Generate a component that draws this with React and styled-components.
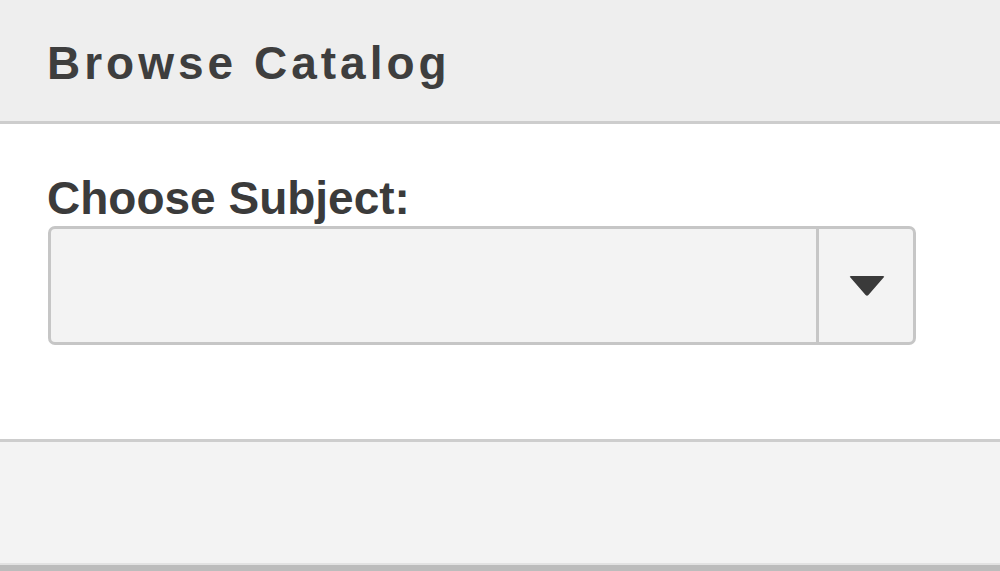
import styled, { createGlobalStyle } from "styled-components";

const GlobalStyle = createGlobalStyle`
  html, body {
    margin: 0;
    padding: 0;
    background: #ffffff;
  }
  body {
    font-family: "Liberation Sans", Arial, Helvetica, sans-serif;
    color: #3b3b3b;
  }
`;

const App = () => {
  return (
    <>
      <GlobalStyle />
      <Panel>
        <Header>
          <Title>Browse Catalog</Title>
        </Header>

        <Body>
          <Label htmlFor="subject">Choose Subject:</Label>
          <Select id="subject">
            <SelectValue />
            <SelectButton aria-label="Open subjects">
              <svg width="38" height="24" viewBox="0 0 38 24">
                <path
                  d="M3 2 L35 2 Q37 2 35.6 3.6 L20.4 21 Q19 22.4 17.6 21 L2.4 3.6 Q1 2 3 2 Z"
                  fill="#3a3a3a"
                />
              </svg>
            </SelectButton>
          </Select>
        </Body>

        <Footer />
      </Panel>
    </>
  );
};
export default App;

const Panel = styled.div`
  display: flex;
  flex-direction: column;
  height: 571px;
  width: 100%;
`;

const Header = styled.div`
  height: 124px;
  flex-shrink: 0;
  box-sizing: border-box;
  padding: 36px 0 0 47px;
  background: #eeeeee;
  border-bottom: 3px solid #cdcdcd;
`;

const Title = styled.h1`
  margin: 0;
  font-size: 46px;
  font-weight: 700;
  letter-spacing: 4px;
  color: #3e3e3e;
`;

const Body = styled.div`
  height: 315px;
  flex-shrink: 0;
  box-sizing: border-box;
  padding: 47px 0 0 47px;
  display: flex;
  flex-direction: column;
  align-items: flex-start;
`;

const Label = styled.label`
  font-size: 46px;
  font-weight: 700;
  color: #3b3b3b;
  margin-bottom: 1px;
`;

const Select = styled.div`
  display: flex;
  flex-shrink: 0;
  width: 868px;
  height: 119px;
  box-sizing: border-box;
  margin-left: 1px;
  border: 3px solid #c6c6c6;
  border-radius: 7px;
  background: #f3f3f3;
  overflow: hidden;
`;

const SelectValue = styled.div`
  flex: 1;
`;

const SelectButton = styled.div`
  width: 92px;
  border-left: 3px solid #c6c6c6;
  display: flex;
  align-items: center;
  justify-content: center;
  padding-left: 2px;
`;

const Footer = styled.div`
  flex: 1;
  background: #f3f3f3;
  border-top: 3px solid #cdcdcd;
  border-bottom: 6px solid #bcbcbc;
  box-shadow: inset 0 -2px 0 #e2e2e2;
`;
